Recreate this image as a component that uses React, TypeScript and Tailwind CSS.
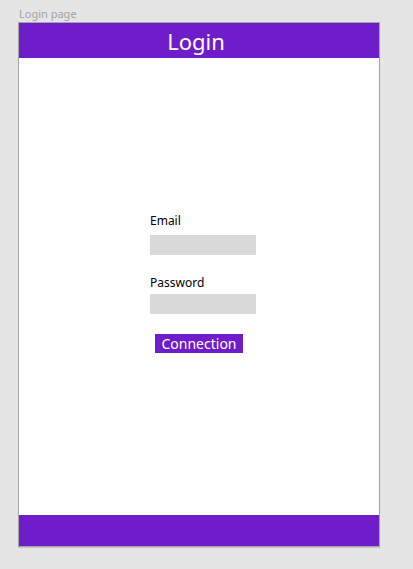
import React from 'react';

export default function App() {
  return (
    <div
      className="w-[413px] h-[569px] bg-[#e5e5e5] pl-[18px] pt-[6px]"
      style={{ fontFamily: '"Noto Sans", "Open Sans", sans-serif' }}
    >
      <div className="text-[11px] leading-[16px] text-[#a3a3a3] pl-[1px]">Login page</div>
      <div className="w-[362px] h-[525px] border border-[#a5a5a5] bg-white flex flex-col shadow-[0_1px_1px_rgba(0,0,0,0.12)]">
        <header className="h-[35px] bg-[#6f1dcb] flex items-center justify-center text-white text-[22px] leading-none pr-[6px]">
          Login
        </header>
        <main className="flex-1 pl-[131px] pt-[155px]">
          <div className="flex flex-col">
            <label className="text-[12px] leading-[16px] text-black">Email</label>
            <div className="mt-[6px] w-[106px] h-[20px] bg-[#d9d9d9]" />
            <label className="mt-[20px] text-[12px] leading-[16px] text-black">Password</label>
            <div className="mt-[3px] w-[106px] h-[20px] bg-[#d9d9d9]" />
            <button className="mt-[20px] ml-[5px] w-[88px] h-[19px] bg-[#6f1dcb] text-white text-[14px] leading-[19px] text-center">
              Connection
            </button>
          </div>
        </main>
        <footer className="h-[31px] bg-[#6f1dcb]" />
      </div>
    </div>
  );
}
